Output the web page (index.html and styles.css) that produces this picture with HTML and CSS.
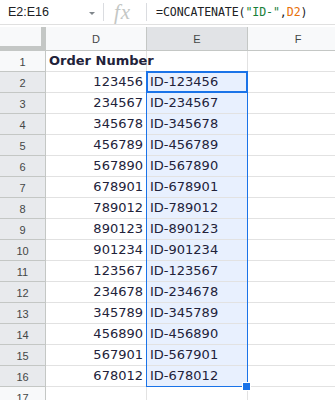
FILE: index.html
```html
<!DOCTYPE html>
<html>
<head>
<meta charset="utf-8">
<link rel="stylesheet" href="styles.css">
</head>
<body>
<div class="formula-bar">
  <div class="namebox"><span class="name">E2:E16</span><span class="caret"></span></div>
  <div class="divider"></div>
  <div class="fx">fx</div>
  <div class="divider"></div>
  <div class="formula">=CONCATENATE(<span class="str">"ID-"</span>,<span class="ref">D2</span>)</div>
</div>
<div class="sheet">
  <div class="grid">
    <div class="corner"></div>
    <div class="colhead">D</div>
    <div class="colhead active">E</div>
    <div class="colhead">F</div>

    <div class="rowhead">1</div><div class="cell bold">Order Number</div><div class="cell"></div><div class="cell"></div>
    <div class="rowhead active">2</div><div class="cell num">123456</div><div class="cell sel">ID-123456</div><div class="cell"></div>
    <div class="rowhead active">3</div><div class="cell num">234567</div><div class="cell sel">ID-234567</div><div class="cell"></div>
    <div class="rowhead active">4</div><div class="cell num">345678</div><div class="cell sel">ID-345678</div><div class="cell"></div>
    <div class="rowhead active">5</div><div class="cell num">456789</div><div class="cell sel">ID-456789</div><div class="cell"></div>
    <div class="rowhead active">6</div><div class="cell num">567890</div><div class="cell sel">ID-567890</div><div class="cell"></div>
    <div class="rowhead active">7</div><div class="cell num">678901</div><div class="cell sel">ID-678901</div><div class="cell"></div>
    <div class="rowhead active">8</div><div class="cell num">789012</div><div class="cell sel">ID-789012</div><div class="cell"></div>
    <div class="rowhead active">9</div><div class="cell num">890123</div><div class="cell sel">ID-890123</div><div class="cell"></div>
    <div class="rowhead active">10</div><div class="cell num">901234</div><div class="cell sel">ID-901234</div><div class="cell"></div>
    <div class="rowhead active">11</div><div class="cell num">123567</div><div class="cell sel">ID-123567</div><div class="cell"></div>
    <div class="rowhead active">12</div><div class="cell num">234678</div><div class="cell sel">ID-234678</div><div class="cell"></div>
    <div class="rowhead active">13</div><div class="cell num">345789</div><div class="cell sel">ID-345789</div><div class="cell"></div>
    <div class="rowhead active">14</div><div class="cell num">456890</div><div class="cell sel">ID-456890</div><div class="cell"></div>
    <div class="rowhead active">15</div><div class="cell num">567901</div><div class="cell sel">ID-567901</div><div class="cell"></div>
    <div class="rowhead active">16</div><div class="cell num">678012</div><div class="cell sel">ID-678012</div><div class="cell"></div>
    <div class="rowhead">17</div><div class="cell"></div><div class="cell"></div><div class="cell"></div>
  </div>
  <div class="range"></div>
  <div class="active-cell"></div>
  <div class="handle"></div>
</div>
</body>
</html>
```

FILE: styles.css
```css
* { box-sizing: border-box; }
html, body {
  margin: 0;
  padding: 0;
  background: #ffffff;
  overflow: hidden;
}
body {
  width: 335px;
  height: 400px;
  font-family: "Liberation Sans", Arial, sans-serif;
}

.formula-bar {
  height: 25px;
  display: flex;
  align-items: center;
  border-bottom: 1px solid #e0e0e0;
}
.namebox {
  width: 103px;
  display: flex;
  align-items: center;
  padding-left: 8px;
  height: 24px;
}
.name {
  font-size: 12.5px;
  color: #202124;
  flex: 1;
}
.caret {
  width: 0;
  height: 0;
  border-left: 3px solid transparent;
  border-right: 3px solid transparent;
  border-top: 3px solid #80868b;
  margin-right: 8px;
  margin-top: 2px;
}
.divider {
  width: 1px;
  height: 18px;
  background: #dadce0;
}
.fx {
  width: 42px;
  padding-left: 10px;
  font-family: "Liberation Serif", "Times New Roman", serif;
  font-style: italic;
  font-size: 21px;
  color: #c4c7c5;
  line-height: 24px;
  height: 24px;
  letter-spacing: 1px;
}
.formula {
  padding-left: 9px;
  font-family: "DejaVu Sans Mono", monospace;
  font-size: 11.6px;
  color: #202124;
  letter-spacing: -0.1px;
}
.str { color: #188038; }
.ref { color: #e8710a; }

.sheet {
  position: relative;
  margin-top: 2px;
}
.grid {
  display: grid;
  grid-template-columns: 46px 101px 101px 101px;
  grid-template-rows: 24px repeat(17, 21px);
}
.corner {
  background: #f8f9fa;
  border-right: 5px solid #c4c7c5;
  border-bottom: 5px solid #c4c7c5;
}
.colhead {
  background: #f8f9fa;
  border-right: 1px solid #c4c7c5;
  border-bottom: 1px solid #c4c7c5;
  font-size: 11px;
  color: #444746;
  display: flex;
  align-items: center;
  justify-content: center;
  padding-top: 1px;
}
.colhead.active {
  background: #e1e3e6;
}
.rowhead {
  background: #f8f9fa;
  border-right: 1px solid #c4c7c5;
  border-bottom: 1px solid #c4c7c5;
  font-size: 11px;
  color: #444746;
  display: flex;
  align-items: center;
  justify-content: center;
  padding-top: 1px;
}
.rowhead.active {
  background: #e8eaed;
}
.cell {
  border-right: 1px solid #e2e2e2;
  border-bottom: 1px solid #e2e2e2;
  font-family: "DejaVu Sans", Verdana, sans-serif;
  font-size: 13px;
  color: #22223a;
  line-height: 20px;
  padding: 0 3px;
  white-space: nowrap;
  overflow: visible;
}
.cell.bold {
  font-weight: bold;
}
.cell.num {
  text-align: right;
}
.cell.sel {
  background: #e8f0fe;
}

.range {
  position: absolute;
  left: 146px;
  top: 44px;
  width: 102px;
  height: 316px;
  border: 1px solid #1a73e8;
  pointer-events: none;
}
.active-cell {
  position: absolute;
  left: 146px;
  top: 44px;
  width: 102px;
  height: 22px;
  border: 2px solid #1a73e8;
}
.handle {
  position: absolute;
  left: 242px;
  top: 355px;
  width: 9px;
  height: 9px;
  background: #1a73e8;
  border: 1px solid #ffffff;
}
```
